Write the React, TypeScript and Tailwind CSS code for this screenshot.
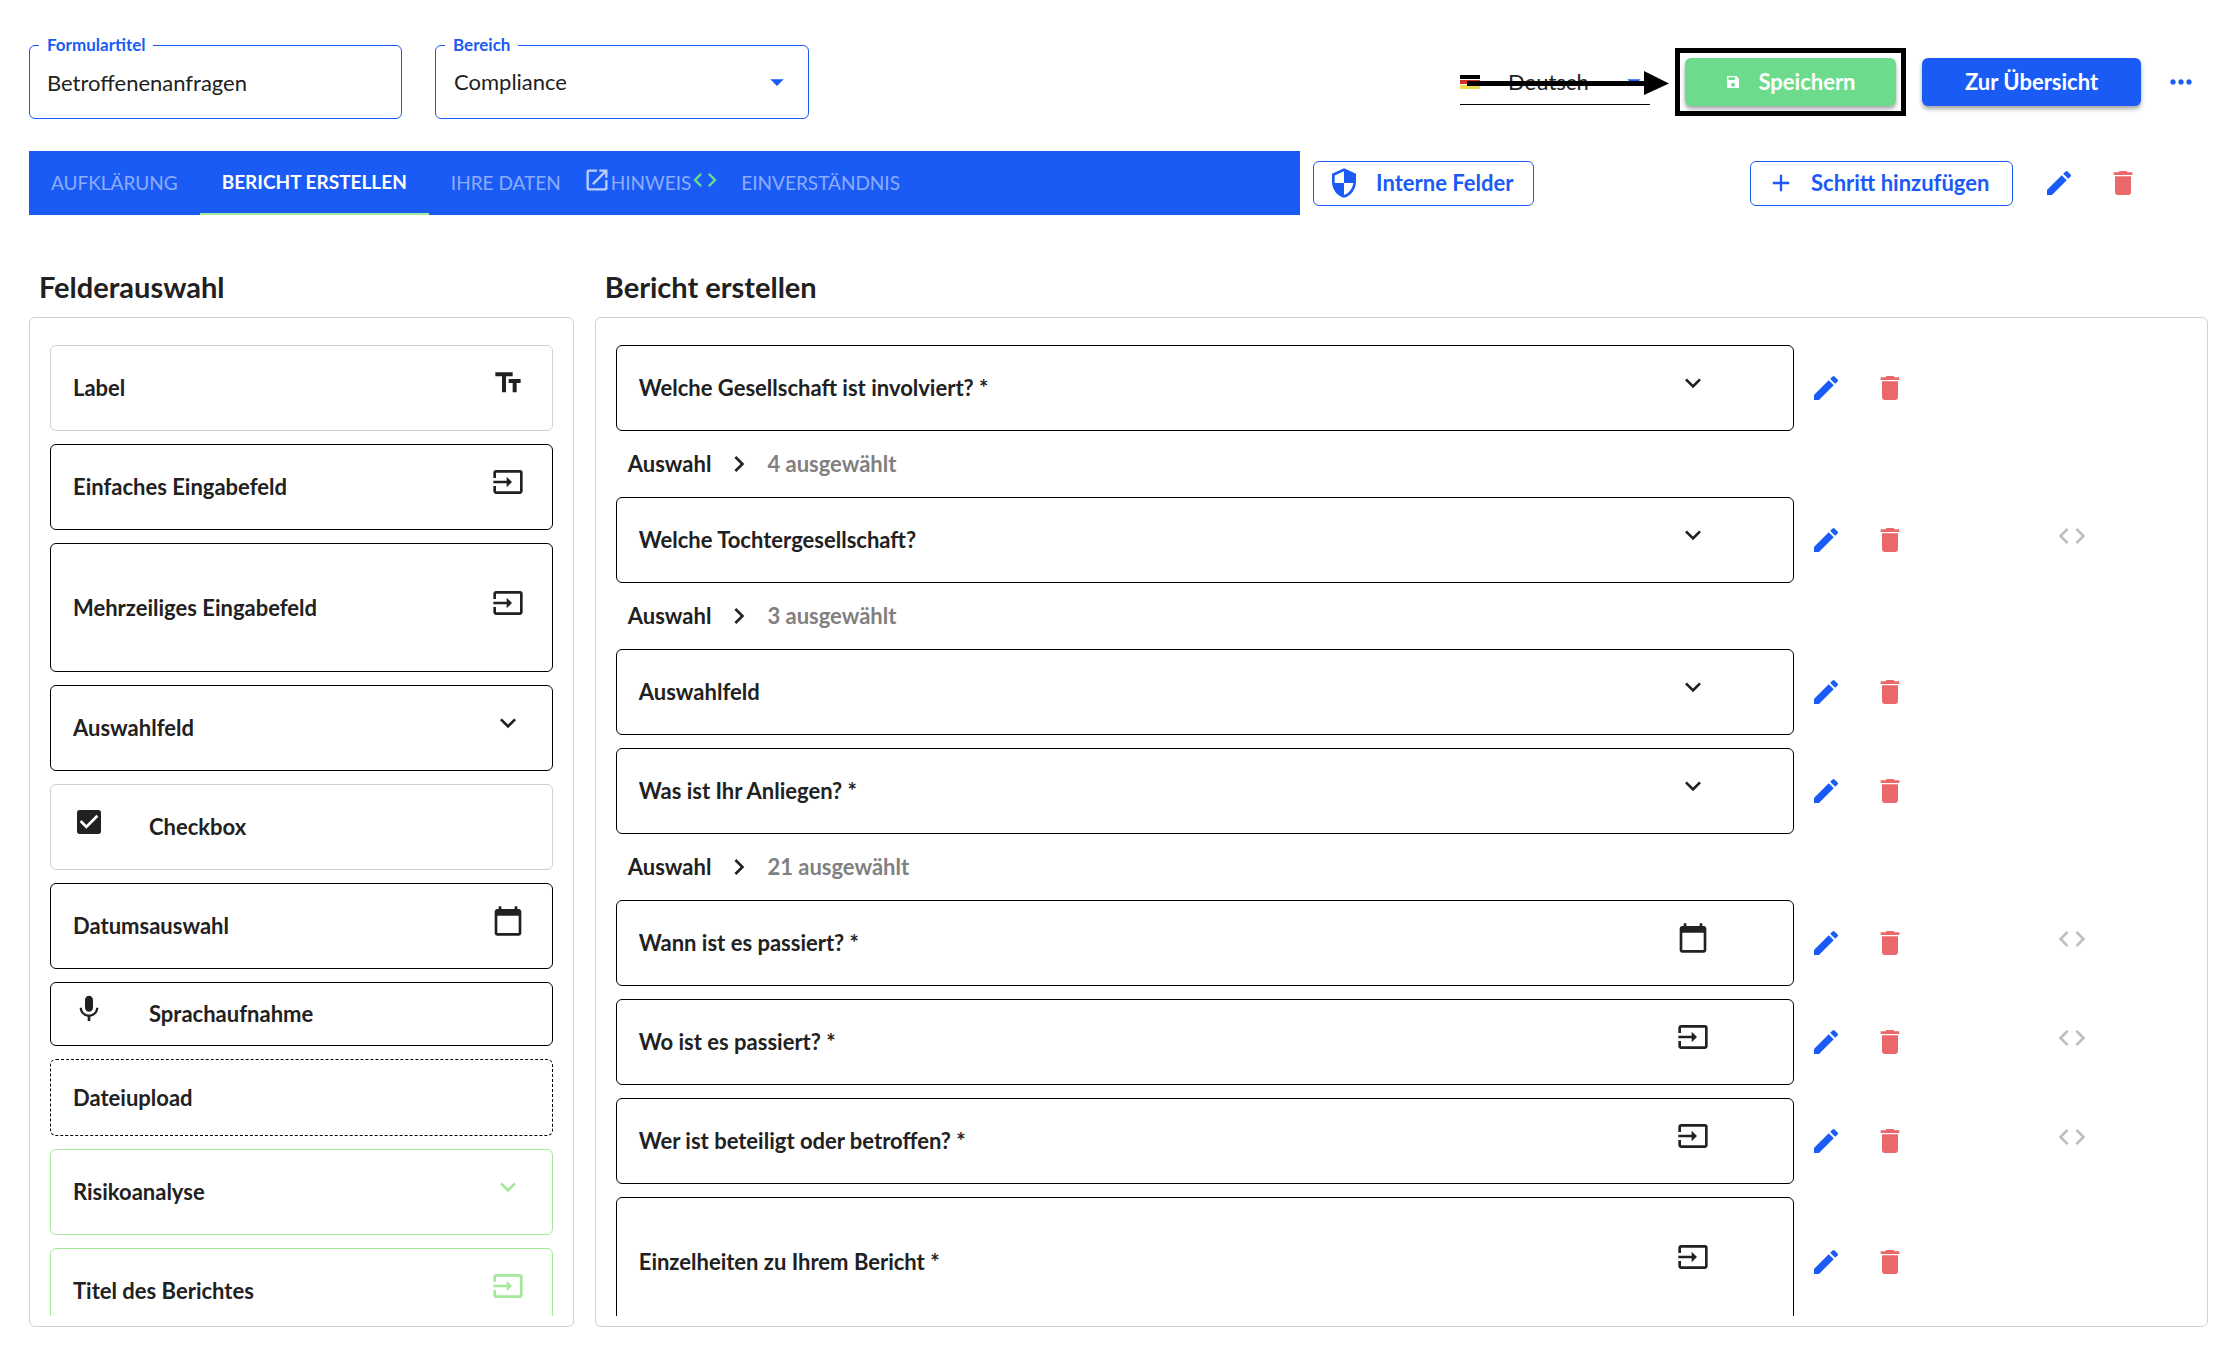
import type { ReactNode } from "react";
import type { IconType } from "react-icons";
import {
  MdAdd,
  MdArrowDropDown,
  MdCalendarToday,
  MdCheckBox,
  MdChevronRight,
  MdCode,
  MdDelete,
  MdEdit,
  MdExpandMore,
  MdInput,
  MdMic,
  MdMoreHoriz,
  MdOpenInNew,
  MdSave,
  MdSecurity,
  MdTextFields,
} from "react-icons/md";

type Tone = "dark" | "light" | "green" | "dashed";

const toneClass: Record<Tone, string> = {
  dark: "border-black",
  light: "border-[#d0d0d0]",
  green: "border-[#a4e89a]",
  dashed: "border-black border-dashed",
};

type PaletteField = {
  label: string;
  icon?: IconType;
  lead?: IconType;
  tone: Tone;
  height: string;
};

const palette: PaletteField[] = [
  { label: "Label", icon: MdTextFields, tone: "light", height: "h-[86px]" },
  { label: "Einfaches Eingabefeld", icon: MdInput, tone: "dark", height: "h-[86px]" },
  { label: "Mehrzeiliges Eingabefeld", icon: MdInput, tone: "dark", height: "h-[129px]" },
  { label: "Auswahlfeld", icon: MdExpandMore, tone: "dark", height: "h-[86px]" },
  { label: "Checkbox", lead: MdCheckBox, tone: "light", height: "h-[86px]" },
  { label: "Datumsauswahl", icon: MdCalendarToday, tone: "dark", height: "h-[86px]" },
  { label: "Sprachaufnahme", lead: MdMic, tone: "dark", height: "h-16" },
  { label: "Dateiupload", tone: "dashed", height: "h-[77px]" },
  { label: "Risikoanalyse", icon: MdExpandMore, tone: "green", height: "h-[86px]" },
  { label: "Titel des Berichtes", icon: MdInput, tone: "green", height: "h-[86px]" },
];

type Question = {
  label: string;
  icon: IconType;
  height: string;
  selected?: number;
  code?: boolean;
};

const questions: Question[] = [
  { label: "Welche Gesellschaft ist involviert? *", icon: MdExpandMore, height: "h-[86px]", selected: 4 },
  { label: "Welche Tochtergesellschaft?", icon: MdExpandMore, height: "h-[86px]", selected: 3, code: true },
  { label: "Auswahlfeld", icon: MdExpandMore, height: "h-[86px]" },
  { label: "Was ist Ihr Anliegen? *", icon: MdExpandMore, height: "h-[86px]", selected: 21 },
  { label: "Wann ist es passiert? *", icon: MdCalendarToday, height: "h-[86px]", code: true },
  { label: "Wo ist es passiert? *", icon: MdInput, height: "h-[86px]", code: true },
  { label: "Wer ist beteiligt oder betroffen? *", icon: MdInput, height: "h-[86px]", code: true },
  { label: "Einzelheiten zu Ihrem Bericht *", icon: MdInput, height: "h-[129px]" },
];

function FloatLabel({ htmlFor, children }: { htmlFor: string; children: ReactNode }) {
  return (
    <label
      htmlFor={htmlFor}
      className="absolute -top-2.5 left-2.5 bg-white px-2 text-[17px] leading-5 font-bold text-[#1a5bf6]"
    >
      {children}
    </label>
  );
}

function EditDelete({ name }: { name: string }) {
  return (
    <>
      <button type="button" aria-label={`${name} bearbeiten`} className="flex w-16 justify-center text-[#1a5bf6]">
        <MdEdit className="size-8" />
      </button>
      <button type="button" aria-label={`${name} löschen`} className="flex w-16 justify-center text-[#ea686b]">
        <MdDelete className="size-8" />
      </button>
    </>
  );
}

function GermanFlag() {
  return (
    <span className="flex h-3.5 w-5 shrink-0 flex-col gap-px">
      <span className="flex-1 bg-black" />
      <span className="flex-1 bg-[#d3302a]" />
      <span className="flex-1 bg-[#ecdc4c]" />
    </span>
  );
}

function Header() {
  return (
    <header className="flex items-center">
      <div className="relative w-[373px]">
        <FloatLabel htmlFor="title">Formulartitel</FloatLabel>
        <input
          id="title"
          defaultValue="Betroffenenanfragen"
          className="h-[74px] w-full rounded-md border border-[#1a5bf6] px-[17px] outline-none"
        />
      </div>
      <div className="relative ml-[33px] w-[374px]">
        <FloatLabel htmlFor="area">Bereich</FloatLabel>
        <select
          id="area"
          className="h-[74px] w-full appearance-none rounded-md border border-[#1a5bf6] px-[18px] outline-none"
        >
          <option>Compliance</option>
        </select>
        <MdArrowDropDown className="pointer-events-none absolute top-[21px] right-4 size-8 text-[#1a5bf6]" />
      </div>

      <div className="relative ml-auto flex w-[190px] items-center border-b border-black">
        <GermanFlag />
        <select aria-label="Sprache" className="h-11 flex-1 appearance-none pl-7 outline-none">
          <option>Deutsch</option>
        </select>
        <MdArrowDropDown className="pointer-events-none absolute right-0 size-8 text-[#1a5bf6]" />
        <svg
          viewBox="0 0 202 24"
          className="pointer-events-none absolute top-[11px] left-[7px] h-6 w-[202px]"
          aria-hidden="true"
        >
          <path d="M0 10H177V0L202 12.500L177 24V15H0Z" />
        </svg>
      </div>
      <div className="ml-[25px] border-[5px] border-black p-[5px]">
        <button
          type="button"
          className="flex h-12 w-[211px] items-center justify-center gap-[17px] rounded-md bg-[#6cdc8c] font-bold text-white shadow-[0_3px_4px_rgba(0,0,0,0.35)]"
        >
          <MdSave className="size-4" />
          Speichern
        </button>
      </div>
      <button
        type="button"
        className="ml-4 h-12 w-[219px] rounded-md bg-[#1a5bf6] font-bold text-white shadow-[0_3px_4px_rgba(0,0,0,0.35)]"
      >
        Zur Übersicht
      </button>
      <button type="button" aria-label="Mehr" className="ml-[13px] flex w-[54px] justify-center text-[#1a5bf6]">
        <MdMoreHoriz className="size-8" />
      </button>
    </header>
  );
}

function StepBar() {
  return (
    <div className="mt-8 flex items-center">
      <nav className="flex h-16 w-7/12 bg-[#1a5bf6] text-[19px] text-white/50">
        <button type="button" className="px-[22px]">AUFKLÄRUNG</button>
        <button type="button" className="border-b-2 border-[#a4e89a] px-[22px] font-bold text-white">
          BERICHT ERSTELLEN
        </button>
        <button type="button" className="px-[22px]">IHRE DATEN</button>
        <button type="button" className="flex items-center">
          <MdOpenInNew className="mb-1.5 size-7 text-white/70" />
          HINWEIS
          <MdCode className="mb-1.5 size-7 text-[#6cdc8c]" />
        </button>
        <button type="button" className="px-[22px]">EINVERSTÄNDNIS</button>
      </nav>
      <button
        type="button"
        className="ml-[13px] flex h-[45px] w-[221px] items-center gap-4 rounded-md border border-[#1a5bf6] pl-3.5 font-bold text-[#1a5bf6]"
      >
        <MdSecurity className="size-8" />
        Interne Felder
      </button>
      <div className="mr-[53px] ml-auto flex items-center">
        <button
          type="button"
          className="mr-[14px] flex h-[45px] w-[263px] items-center gap-4 rounded-md border border-[#1a5bf6] pl-4 font-bold text-[#1a5bf6]"
        >
          <MdAdd className="size-7" />
          Schritt hinzufügen
        </button>
        <EditDelete name="Schritt" />
      </div>
    </div>
  );
}

function PaletteCard({ label, icon: Icon, lead: Lead, tone, height }: PaletteField) {
  return (
    <li className={`flex shrink-0 items-center rounded-md border pr-7 pl-[22px] font-bold ${toneClass[tone]} ${height}`}>
      {Lead && <Lead className="mr-11 mb-2.5 size-8" />}
      {label}
      {Icon && <Icon className={`mb-2.5 ml-auto size-8 ${tone === "green" ? "text-[#a4e89a]" : ""}`} />}
    </li>
  );
}

function QuestionRow({ label, icon: Icon, height, selected, code }: Question) {
  return (
    <li className="shrink-0">
      <div className="flex items-center">
        <div className={`flex w-9/12 items-center rounded-md border border-black pr-[84px] pl-[22px] font-bold ${height}`}>
          {label}
          <Icon className="mb-2.5 ml-auto size-8" />
        </div>
        <EditDelete name={label} />
        {code && <MdCode className="mb-2 ml-[134px] size-8 text-[#bdbdbd]" />}
      </div>
      {selected !== undefined && (
        <button type="button" className="mt-[13px] flex h-10 items-center pl-3 font-bold">
          Auswahl
          <MdChevronRight className="mx-3 size-8" />
          <span className="text-[#808080]">{selected} ausgewählt</span>
        </button>
      )}
    </li>
  );
}

function Panel({ title, children }: { title: string; children: ReactNode }) {
  return (
    <>
      <h2 className="mb-3.5 pl-2.5 text-[29px] leading-8 font-bold">{title}</h2>
      <div className="flex min-h-0 flex-1 flex-col rounded-md border border-[#d0d0d0] px-5 pt-[27px] pb-2.5">
        <ul className="flex min-h-0 flex-1 flex-col gap-[13px] overflow-y-auto [scrollbar-width:none]">{children}</ul>
      </div>
    </>
  );
}

export default function App() {
  return (
    <div className="flex h-screen flex-col bg-white pt-[45px] pr-8 pb-[31px] pl-[29px] font-['Lato',sans-serif] text-[22px] leading-7 text-[#212121]">
      <Header />
      <StepBar />
      <main className="mt-14 flex min-h-0 flex-1 gap-[21px]">
        <section className="flex w-1/4 flex-col">
          <Panel title="Felderauswahl">
            {palette.map((field) => (
              <PaletteCard key={field.label} {...field} />
            ))}
          </Panel>
        </section>
        <section className="flex flex-1 flex-col">
          <Panel title="Bericht erstellen">
            {questions.map((question) => (
              <QuestionRow key={question.label} {...question} />
            ))}
          </Panel>
        </section>
      </main>
    </div>
  );
}
